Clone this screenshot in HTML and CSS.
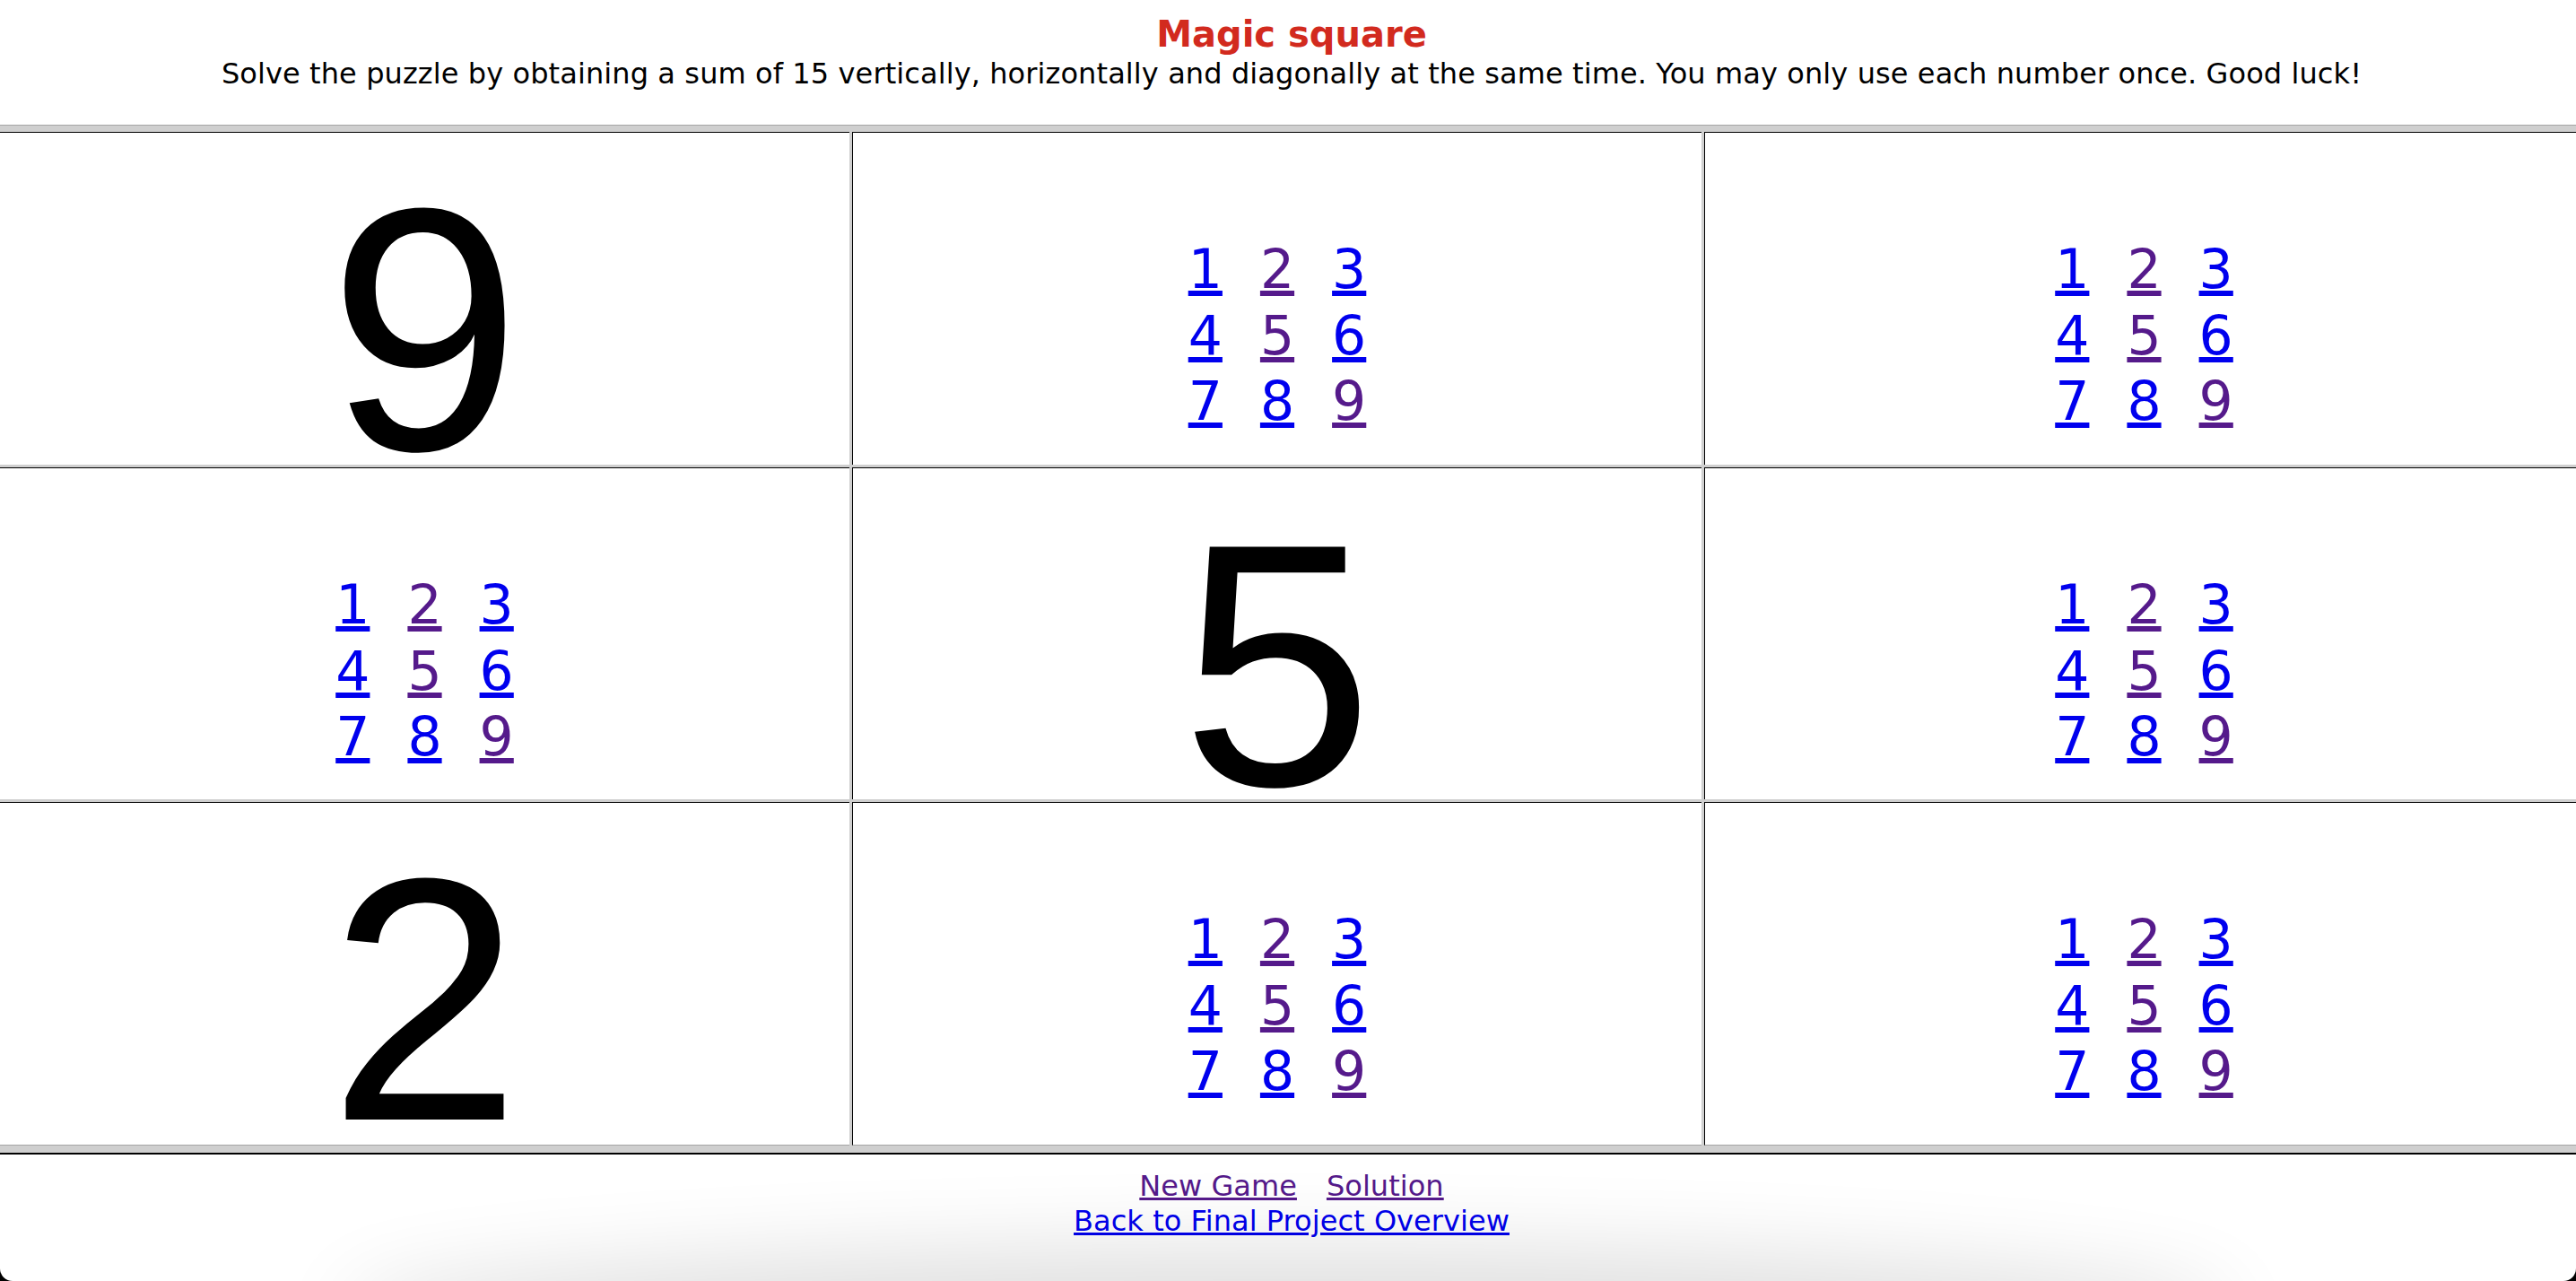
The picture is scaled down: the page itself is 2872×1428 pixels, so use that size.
FILE: index.html
```html
<!DOCTYPE html>
<html lang="en">
<head>
<meta charset="utf-8">
<title>Magic square</title>
<link rel="stylesheet" href="styles.css">
</head>
<body>
<div class="window">
  <div class="page">
    <header class="header">
      <div class="title">Magic square</div>
      <div class="subtitle">Solve the puzzle by obtaining a sum of 15 vertically, horizontally and diagonally at the same time. You may only use each number once. Good luck!</div>
    </header>

    <div class="board">
      <div class="cell cell-big first-col"><span class="big">9</span></div>
      <div class="cell cell-pick">
        <div class="picks">
          <a href="#" class="pick">1</a><a href="#" class="pick visited">2</a><a href="#" class="pick">3</a>
          <a href="#" class="pick">4</a><a href="#" class="pick visited">5</a><a href="#" class="pick">6</a>
          <a href="#" class="pick">7</a><a href="#" class="pick">8</a><a href="#" class="pick visited">9</a>
        </div>
      </div>
      <div class="cell cell-pick">
        <div class="picks">
          <a href="#" class="pick">1</a><a href="#" class="pick visited">2</a><a href="#" class="pick">3</a>
          <a href="#" class="pick">4</a><a href="#" class="pick visited">5</a><a href="#" class="pick">6</a>
          <a href="#" class="pick">7</a><a href="#" class="pick">8</a><a href="#" class="pick visited">9</a>
        </div>
      </div>

      <div class="cell cell-pick first-col">
        <div class="picks">
          <a href="#" class="pick">1</a><a href="#" class="pick visited">2</a><a href="#" class="pick">3</a>
          <a href="#" class="pick">4</a><a href="#" class="pick visited">5</a><a href="#" class="pick">6</a>
          <a href="#" class="pick">7</a><a href="#" class="pick">8</a><a href="#" class="pick visited">9</a>
        </div>
      </div>
      <div class="cell cell-big"><span class="big">5</span></div>
      <div class="cell cell-pick">
        <div class="picks">
          <a href="#" class="pick">1</a><a href="#" class="pick visited">2</a><a href="#" class="pick">3</a>
          <a href="#" class="pick">4</a><a href="#" class="pick visited">5</a><a href="#" class="pick">6</a>
          <a href="#" class="pick">7</a><a href="#" class="pick">8</a><a href="#" class="pick visited">9</a>
        </div>
      </div>

      <div class="cell cell-big first-col last-row"><span class="big">2</span></div>
      <div class="cell cell-pick last-row">
        <div class="picks">
          <a href="#" class="pick">1</a><a href="#" class="pick visited">2</a><a href="#" class="pick">3</a>
          <a href="#" class="pick">4</a><a href="#" class="pick visited">5</a><a href="#" class="pick">6</a>
          <a href="#" class="pick">7</a><a href="#" class="pick">8</a><a href="#" class="pick visited">9</a>
        </div>
      </div>
      <div class="cell cell-pick last-row">
        <div class="picks">
          <a href="#" class="pick">1</a><a href="#" class="pick visited">2</a><a href="#" class="pick">3</a>
          <a href="#" class="pick">4</a><a href="#" class="pick visited">5</a><a href="#" class="pick">6</a>
          <a href="#" class="pick">7</a><a href="#" class="pick">8</a><a href="#" class="pick visited">9</a>
        </div>
      </div>
    </div>

    <footer class="footer">
      <div class="footer-row">
        <a href="#" class="link visited">New Game</a>
        <a href="#" class="link visited">Solution</a>
      </div>
      <div class="footer-row">
        <a href="#" class="link">Back to Final Project Overview</a>
      </div>
    </footer>
  </div>
  <div class="shade"></div>
</div>
</body>
</html>
```

FILE: styles.css
```css
html, body {
  margin: 0;
  padding: 0;
  background: #000;
  overflow: hidden;
}

body {
  font-family: "DejaVu Sans", Verdana, sans-serif;
  color: #000;
}

.window {
  position: relative;
  width: 2872px;
  height: 1428px;
  background: #fff;
  overflow: hidden;
  border-radius: 0 0 14px 14px;
}

.page {
  width: 2880px;
}

.header {
  height: 139px;
  box-sizing: border-box;
  padding-top: 15px;
  text-align: center;
}

.title {
  font-size: 40px;
  line-height: 47px;
  font-weight: bold;
  color: #d22a1e;
}

.subtitle {
  font-size: 32px;
  line-height: 40px;
  letter-spacing: 0.1px;
}

.board {
  display: grid;
  grid-template-columns: 947px 947px 1fr;
  grid-template-rows: 371px 370px 383px;
  gap: 3px;
  background: #cfcfcf;
  border-top: 1px solid #a6a6a6;
  border-bottom: 2px solid #000;
  padding: 7px 0 8px 0;
}

.cell {
  background: #fff;
  border-top: 1px solid #000;
  border-left: 1px solid #000;
  box-sizing: border-box;
  display: flex;
  justify-content: center;
  align-items: flex-start;
}

.cell.first-col {
  border-left: none;
}

.cell.last-row {
  border-bottom: 1px solid #a6a6a6;
}

.cell-big {
  padding-top: 27px;
}

.big {
  font-family: "Liberation Sans", Arial, sans-serif;
  font-size: 386px;
  line-height: 386px;
  color: #000;
}

.cell-pick {
  padding-top: 116px;
}

.picks {
  display: grid;
  grid-template-columns: repeat(3, auto);
  column-gap: 42px;
  font-size: 60px;
  line-height: 73.5px;
}

.pick {
  color: #0000ee;
  text-decoration: underline;
}

.pick.visited,
.link.visited {
  color: #551a8b;
}

.footer {
  padding-top: 16px;
  text-align: center;
  font-size: 32px;
  line-height: 39px;
  letter-spacing: 0.05px;
}

.footer-row {
  display: flex;
  justify-content: center;
  gap: 33px;
}

.link {
  color: #0000ee;
  text-decoration: underline;
}

.shade {
  position: absolute;
  left: 420px;
  right: 420px;
  bottom: -70px;
  height: 70px;
  border-radius: 50%;
  box-shadow: 0 0 90px 40px rgba(0, 0, 0, 0.12);
  pointer-events: none;
}
```
